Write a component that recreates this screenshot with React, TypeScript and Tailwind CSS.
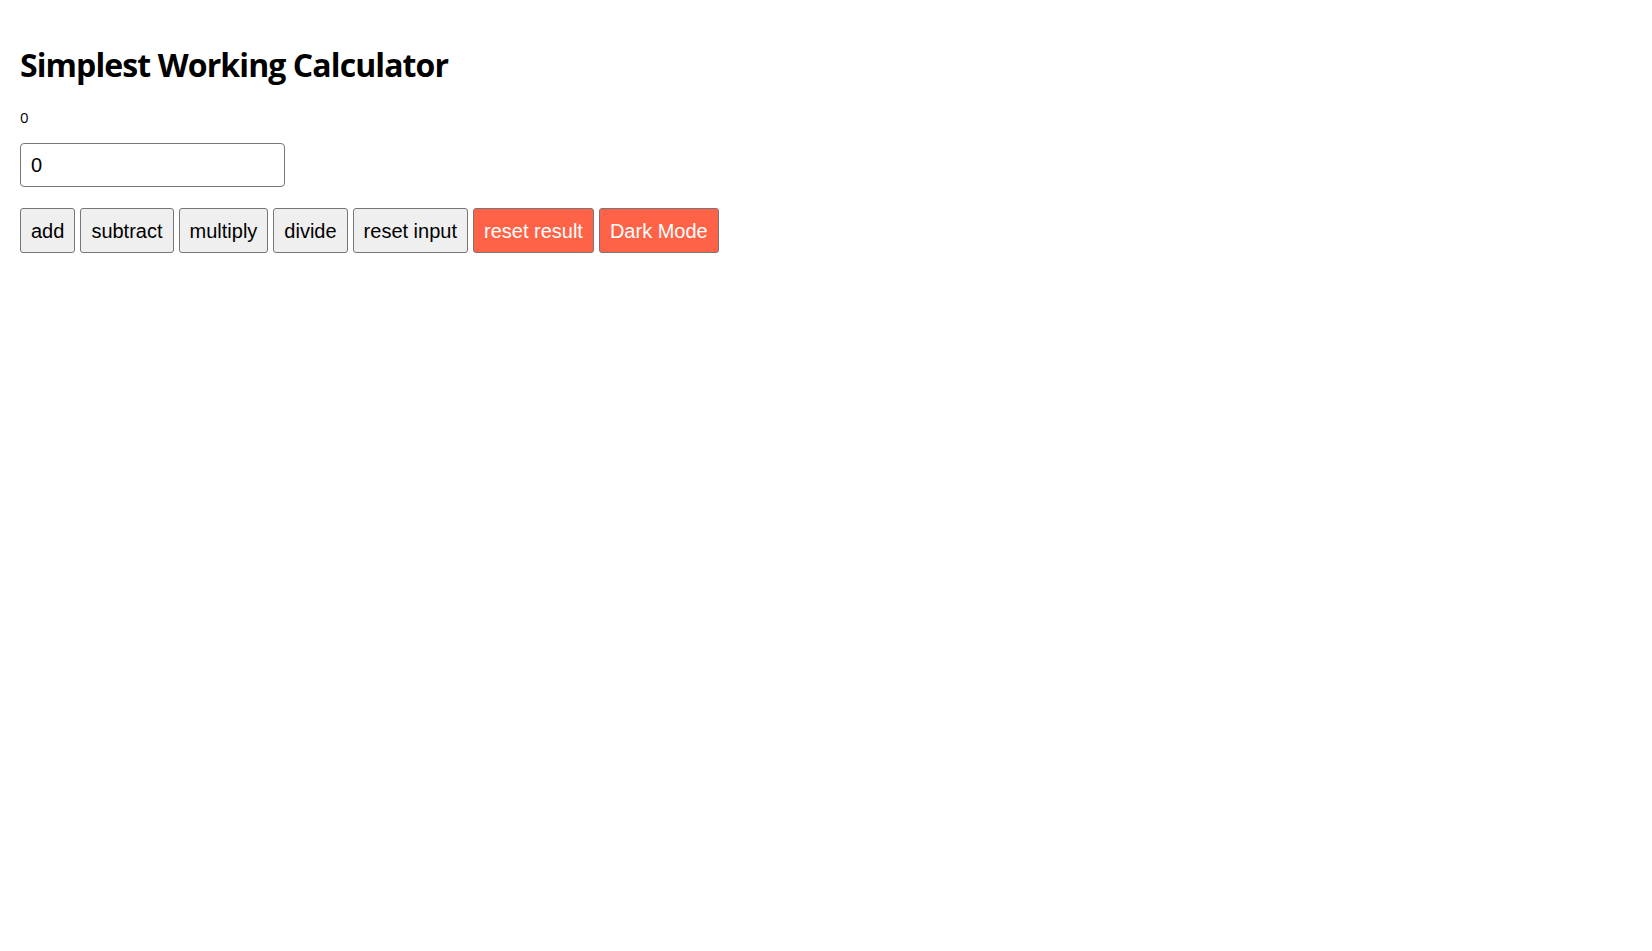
export default function App() {
  return (
    <div className="min-h-screen bg-white p-5 font-['Liberation_Sans',Arial,sans-serif] text-black">
      <h1 className="mt-[23px] text-[32px] leading-[43px] font-bold font-['Open_Sans','Noto_Sans',sans-serif] tracking-[-0.9px]">
        Simplest Working Calculator
      </h1>
      <p className="mt-[22px] text-[15px] leading-[18px] font-['Open_Sans','Noto_Sans',sans-serif]">0</p>
      <input
        className="mt-[17px] block w-[265px] h-[44px] rounded-[4px] border border-[#767676] px-[10px] text-[20px] outline-none"
        defaultValue="0"
      />
      <div className="mt-[21px] flex gap-[5px]">
        <button className="h-[45px] rounded-[3px] border border-[#767676] bg-[#efefef] px-[10px] text-[20px]">add</button>
        <button className="h-[45px] rounded-[3px] border border-[#767676] bg-[#efefef] px-[10px] text-[20px]">subtract</button>
        <button className="h-[45px] rounded-[3px] border border-[#767676] bg-[#efefef] px-[10px] text-[20px]">multiply</button>
        <button className="h-[45px] rounded-[3px] border border-[#767676] bg-[#efefef] px-[10px] text-[20px]">divide</button>
        <button className="h-[45px] rounded-[3px] border border-[#767676] bg-[#efefef] px-[10px] text-[20px]">reset input</button>
        <button className="h-[45px] rounded-[3px] border border-[#767676] bg-[#ff6347] px-[10px] text-[20px] text-white">reset result</button>
        <button className="h-[45px] rounded-[3px] border border-[#767676] bg-[#ff6347] px-[10px] text-[20px] text-white">Dark Mode</button>
      </div>
    </div>
  )
}
